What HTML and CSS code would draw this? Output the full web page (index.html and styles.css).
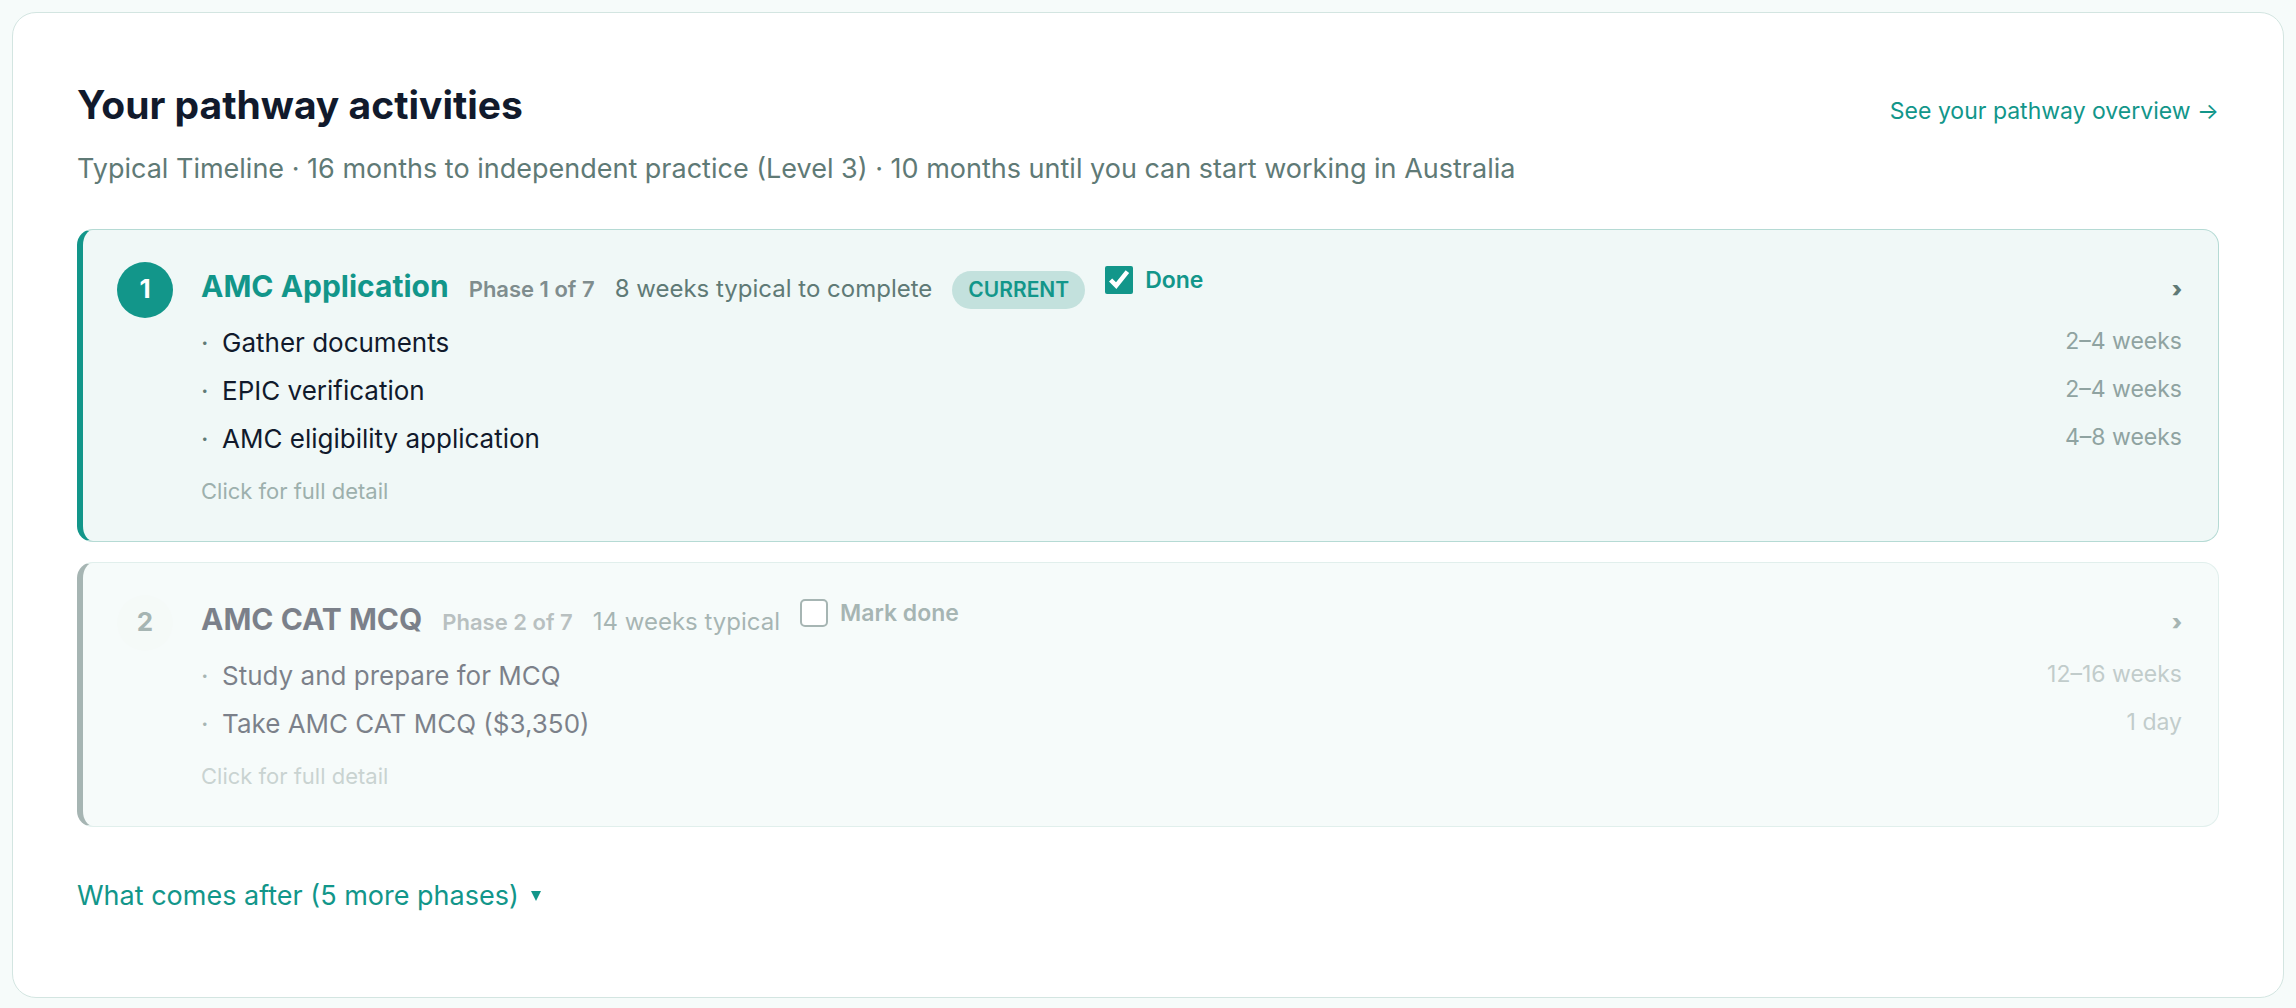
FILE: index.html
```html
<!DOCTYPE html>
<html lang="en">
<head>
  <meta charset="utf-8" />
  <title>Your pathway activities</title>
  <meta name="viewport" content="width=device-width, initial-scale=1" />
  <link rel="stylesheet" href="styles.css">
</head>
<body>
  <main class="card">
    <header class="card-header">
      <h1>Your pathway activities</h1>
      <a class="overview-link" href="#overview">See your pathway overview →</a>
    </header>
    <p class="timeline">Typical Timeline · 16 months to independent practice (Level 3) · 10 months until you can start working in Australia</p>

    <section class="phases">
      <article class="phase current">
        <span class="step">1</span>
        <div class="phase-body">
          <div class="phase-head">
            <h2>AMC Application</h2>
            <span class="phase-count">Phase 1 of 7</span>
            <span class="phase-time">8 weeks typical to complete</span>
            <span class="badge">CURRENT</span>
            <label class="done" for="done1"><input type="checkbox" id="done1" checked> Done</label>
            <span class="chevron">›</span>
          </div>
          <ul class="activities">
            <li><span class="name">Gather documents</span><span class="duration">2–4 weeks</span></li>
            <li><span class="name">EPIC verification</span><span class="duration">2–4 weeks</span></li>
            <li><span class="name">AMC eligibility application</span><span class="duration">4–8 weeks</span></li>
          </ul>
          <p class="hint">Click for full detail</p>
        </div>
      </article>

      <article class="phase upcoming">
        <span class="step">2</span>
        <div class="phase-body">
          <div class="phase-head">
            <h2>AMC CAT MCQ</h2>
            <span class="phase-count">Phase 2 of 7</span>
            <span class="phase-time">14 weeks typical</span>
            <label class="done" for="done2"><input type="checkbox" id="done2"> Mark done</label>
            <span class="chevron">›</span>
          </div>
          <ul class="activities">
            <li><span class="name">Study and prepare for MCQ</span><span class="duration">12–16 weeks</span></li>
            <li><span class="name">Take AMC CAT MCQ ($3,350)</span><span class="duration">1 day</span></li>
          </ul>
          <p class="hint">Click for full detail</p>
        </div>
      </article>
    </section>

    <button type="button" class="more">What comes after (5 more phases) <span class="caret"></span></button>
  </main>
</body>
</html>
```

FILE: styles.css
```css
:root {
  --teal: #12968a;
  --bg: #f6fbfa;
  --text: #111a2c;
  --sub: #5f7a76;
  --border: #d3e5e1;
}

* { box-sizing: border-box; margin: 0; padding: 0; }
body {
  font-family: Inter, "Open Sans", sans-serif;
  font-size: 26px;
  background: var(--bg);
  color: var(--text);
  padding: 12px 12px 0;
}

.card {
  background: #fff;
  border: 1px solid var(--border);
  border-radius: 24px;
  padding: 64px;
}

.card-header {
  display: flex;
  align-items: baseline;
  justify-content: space-between;
}

h1 {
  font-size: 39px;
  font-weight: 700;
  line-height: 56px;
}

.overview-link {
  font-size: 23px;
  line-height: 24px;
  color: var(--teal);
  text-decoration: none;
}

.timeline {
  margin-top: 14px;
  font-size: 27px;
  line-height: 44px;
  color: var(--sub);
}

.phases {
  display: flex;
  flex-direction: column;
  gap: 20px;
  margin-top: 38px;
}

.phase {
  display: flex;
  gap: 28px;
  padding: 32px 36px 30px 34px;
  border: 1px solid #b5dad4;
  border-left: 6px solid var(--teal);
  border-radius: 16px;
  background: #f0f8f7;
}

.step {
  flex: none;
  width: 56px;
  height: 56px;
  border-radius: 50%;
  background: var(--teal);
  color: #fff;
  font-weight: 700;
  line-height: 54px;
  text-align: center;
}

.phase-body {
  flex: 1;
}

.phase-head {
  display: flex;
  align-items: baseline;
  gap: 20px;
  line-height: 48px;
}

h2 {
  font-size: 30px;
  font-weight: 700;
}

.current h2 {
  color: var(--teal);
}

.phase-count {
  font-size: 22px;
  font-weight: 600;
  color: #7f8d8e;
}

.phase-time {
  font-size: 24px;
  color: var(--sub);
}

.badge {
  padding: 0 16px;
  border-radius: 19px;
  background: #c3e1dd;
  color: var(--teal);
  font-size: 21px;
  font-weight: 600;
  line-height: 38px;
}

.done {
  display: flex;
  align-items: center;
  align-self: flex-start;
  gap: 12px;
  font-size: 23px;
  font-weight: 600;
  line-height: 36px;
  color: var(--sub);
}

.current .done {
  color: var(--teal);
}

.done input {
  width: 28px;
  height: 28px;
  accent-color: var(--teal);
}

.done input:not(:checked) {
  appearance: none;
  border: 2px solid var(--sub);
  border-radius: 5px;
  background: #fff;
}

.chevron {
  margin-left: auto;
  font-size: 22px;
  font-weight: 900;
  line-height: 40px;
  color: var(--sub);
}

.activities {
  margin-top: 6px;
  list-style: none;
}

.activities li {
  display: flex;
  justify-content: space-between;
  line-height: 48px;
}

.name::before {
  content: "·";
  display: inline-block;
  width: 21px;
  color: var(--sub);
}

.duration {
  font-size: 23px;
  line-height: 44px;
  color: #8fa3a1;
}

.hint {
  margin-top: 8px;
  font-size: 22px;
  line-height: 40px;
  color: #9db0ad;
}

/* phases that have not been reached yet */
.upcoming {
  opacity: .55;
  border-color: #c9e3de;
  border-left-color: var(--sub);
}

.upcoming .step {
  background: #edf6f4;
  color: var(--sub);
}

.more {
  display: flex;
  align-items: center;
  gap: 12px;
  margin-top: 32px;
  border: none;
  background: none;
  color: var(--teal);
  font-family: inherit;
  font-size: 27px;
  line-height: 74px;
  cursor: pointer;
}

.caret {
  border: 5px solid transparent;
  border-top: 10px solid var(--teal);
  border-bottom: none;
}
```
